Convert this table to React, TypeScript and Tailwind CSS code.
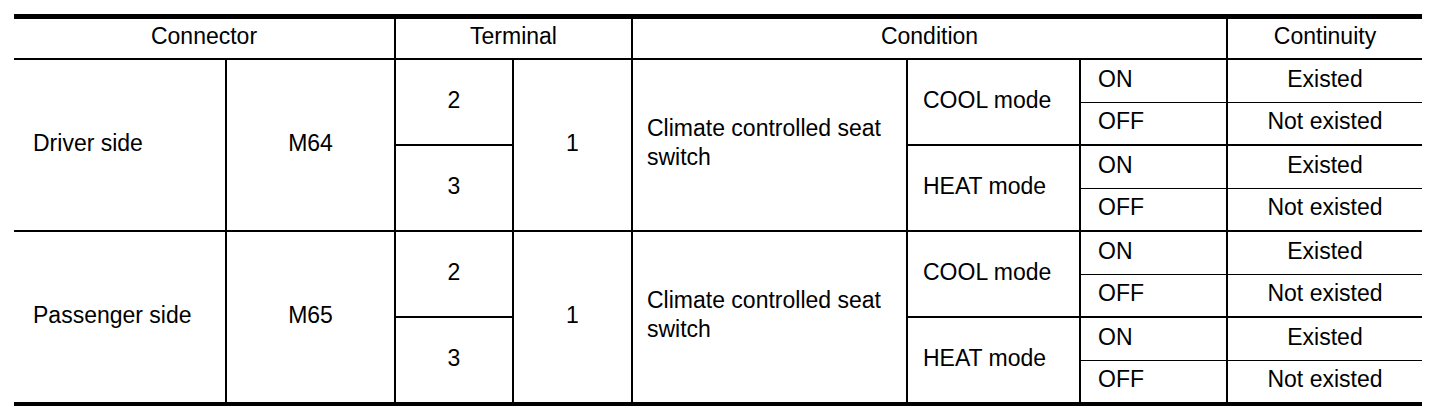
import React from 'react';

const groups = [
	{
		side: 'Driver side',
		connector: 'M64',
		hb: 'border-b-2',
		rows: ['row-start-2', 'row-start-3', 'row-start-4', 'row-start-5'],
	},
	{
		side: 'Passenger side',
		connector: 'M65',
		hb: '',
		rows: ['row-start-6', 'row-start-7', 'row-start-8', 'row-start-9'],
	},
];

const modes = [
	{ terminal: '2', mode: 'COOL mode' },
	{ terminal: '3', mode: 'HEAT mode' },
];

function Cell({ className = '', children }: { className?: string; children?: React.ReactNode }) {
	return <div className={`flex items-center border-black pb-[4px] ${className}`}>{children}</div>;
}

function App() {
	return (
		<div className="bg-white w-[1440px] h-[410px] pt-[14px] pl-[14px] text-black text-[23px] leading-[29px] font-['Liberation_Sans',Arial,sans-serif]">
			<div className="grid w-[1408px] grid-cols-[213px_169px_118px_119px_275px_173px_147px_194px] grid-rows-[41px_43px_43px_43px_43px_43px_43px_43px_41px] border-t-[5px] border-b-4 border-black">
				<Cell className="col-start-1 col-span-2 row-start-1 justify-center border-r-2 border-b-2">Connector</Cell>
				<Cell className="col-start-3 col-span-2 row-start-1 justify-center border-r-2 border-b-2">Terminal</Cell>
				<Cell className="col-start-5 col-span-3 row-start-1 justify-center border-r-2 border-b-2">Condition</Cell>
				<Cell className="col-start-8 row-start-1 justify-center border-b-2">Continuity</Cell>

				{groups.map((g) => (
					<React.Fragment key={g.side}>
						<Cell className={`col-start-1 row-span-4 ${g.rows[0]} pl-[19px] border-r-2 ${g.hb}`}>{g.side}</Cell>
						<Cell className={`col-start-2 row-span-4 ${g.rows[0]} justify-center border-r-2 ${g.hb}`}>{g.connector}</Cell>
						<Cell className={`col-start-4 row-span-4 ${g.rows[0]} justify-center border-r-2 ${g.hb}`}>1</Cell>
						<Cell className={`col-start-5 row-span-4 ${g.rows[0]} pl-[14px] border-r-2 ${g.hb}`}>
							<p>
								Climate controlled seat
								<br />
								switch
							</p>
						</Cell>
						{modes.map((m, i) => {
							const last = i === 1 ? g.hb : 'border-b-2';
							const r1 = g.rows[i * 2];
							const r2 = g.rows[i * 2 + 1];
							return (
								<React.Fragment key={m.mode}>
									<Cell className={`col-start-3 row-span-2 ${r1} justify-center border-r-2 ${last}`}>{m.terminal}</Cell>
									<Cell className={`col-start-6 row-span-2 ${r1} pl-[15px] border-r-2 ${last}`}>{m.mode}</Cell>
									<Cell className={`col-start-7 ${r1} pl-[17px] border-r-2 border-b`}>ON</Cell>
									<Cell className={`col-start-8 ${r1} justify-center border-b`}>Existed</Cell>
									<Cell className={`col-start-7 ${r2} pl-[17px] border-r-2 ${last}`}>OFF</Cell>
									<Cell className={`col-start-8 ${r2} justify-center ${last}`}>Not existed</Cell>
								</React.Fragment>
							);
						})}
					</React.Fragment>
				))}
			</div>
		</div>
	);
}

export default App;
